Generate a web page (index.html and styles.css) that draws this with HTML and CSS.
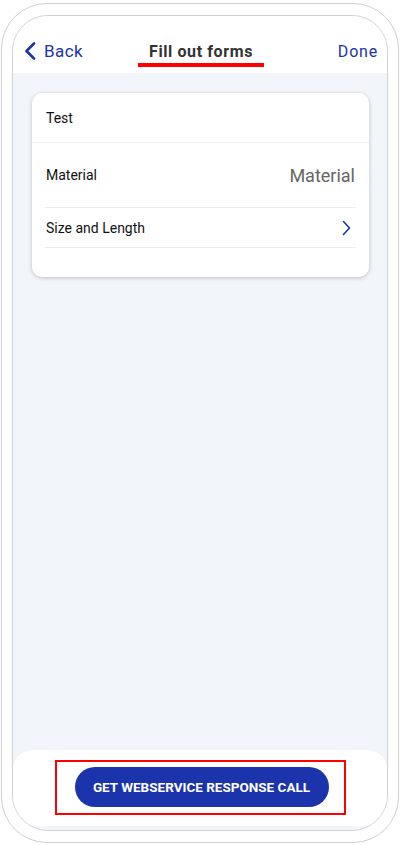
FILE: index.html
```html
<!DOCTYPE html>
<html>
<head>
<meta charset="utf-8">
<link rel="stylesheet" href="styles.css">
</head>
<body>
<div class="device">
  <div class="screen">
    <header class="topbar">
      <div class="back">
        <svg class="back-icon" width="12" height="18" viewBox="0 0 12 18"><path d="M10 1.5 L2.5 9 L10 16.5" fill="none" stroke="#1b34a6" stroke-width="2.6" stroke-linecap="round" stroke-linejoin="round"/></svg>
        <span>Back</span>
      </div>
      <div class="title">Fill out forms</div>
      <div class="done">Done</div>
    </header>
    <main class="content">
      <section class="card">
        <div class="row row-test"><span class="label">Test</span></div>
        <div class="row row-material"><span class="label">Material</span><span class="value">Material</span></div>
        <div class="row row-size">
          <span class="label">Size and Length</span>
          <svg class="chev" width="9" height="16" viewBox="0 0 9 16"><path d="M1.5 1.5 L7.5 8 L1.5 14.5" fill="none" stroke="#1b34a6" stroke-width="1.6" stroke-linecap="round" stroke-linejoin="round"/></svg>
        </div>
        <div class="card-foot"></div>
      </section>
    </main>
    <footer class="bottom">
      <div class="highlight">
        <button class="cta">GET WEBSERVICE RESPONSE CALL</button>
      </div>
    </footer>
  </div>
</div>
</body>
</html>
```
FILE: styles.css
```css
* { box-sizing: border-box; }
html, body { margin: 0; padding: 0; background: #ffffff; }
body {
  width: 400px;
  height: 845px;
  font-family: Roboto, "Noto Sans", Arial, sans-serif;
  padding: 3px 1px 0 1px;
}
.device {
  width: 398px;
  height: 840px;
  border: 1px solid #cfcfcf;
  border-radius: 46px;
  padding: 11px 10px 10px 10px;
  background: #ffffff;
}
.screen {
  width: 376px;
  height: 816px;
  border: 1px solid #d2d2d2;
  border-radius: 36px;
  overflow: hidden;
  background: #f2f5f9;
  display: flex;
  flex-direction: column;
}
.topbar {
  height: 57px;
  flex: none;
  background: #ffffff;
  display: grid;
  grid-template-columns: 1fr auto 1fr;
  align-items: center;
  padding: 13px 9px 0 11px;
}
.back {
  display: flex;
  align-items: center;
  gap: 8px;
  color: #1b34a6;
  font-size: 17px;
  letter-spacing: 0.4px;
}
.back-icon { display: block; }
.title {
  position: relative;
  font-size: 16px;
  font-weight: 700;
  color: #333333;
  letter-spacing: 0.6px;
}
.title::after {
  content: "";
  position: absolute;
  left: 50%;
  top: 21px;
  width: 126px;
  height: 4px;
  margin-left: -63px;
  background: #ff0000;
}
.done {
  justify-self: end;
  color: #1b34a6;
  font-size: 16px;
  letter-spacing: 0.8px;
}
.content {
  flex: 1;
  padding: 20px 18px 0 19px;
}
.card {
  background: #ffffff;
  border-radius: 10px;
  box-shadow: 0 1px 4px rgba(0, 0, 0, 0.22);
}
.row {
  display: flex;
  align-items: center;
  justify-content: space-between;
  padding: 0 14px 0 14px;
}
.label {
  font-size: 14px;
  color: #111111;
}
.row-test {
  height: 50px;
  border-bottom: 1px solid #f1f1f1;
}
.row-material {
  height: 65px;
  margin: 0 13px;
  padding: 0 1px 0 1px;
  border-bottom: 1px solid #ececec;
}
.value {
  font-size: 18px;
  color: #666666;
}
.row-size {
  height: 40px;
  margin: 0 13px;
  padding: 0 5px 0 1px;
  border-bottom: 1px solid #ececec;
}
.chev { display: block; }
.card-foot { height: 29px; }
.bottom {
  flex: none;
  height: 76px;
  margin-bottom: 4px;
  background: #ffffff;
  border-radius: 20px 20px 0 0;
  display: flex;
  justify-content: center;
  padding-top: 10px;
}
.highlight {
  width: 291px;
  height: 55px;
  border: 2px solid #ff0000;
  padding: 5px 17px 0 18px;
}
.cta {
  display: block;
  width: 254px;
  height: 40px;
  border: none;
  border-radius: 20px;
  background: #1b34ab;
  color: #ffffff;
  font-family: Roboto, "Noto Sans", Arial, sans-serif;
  font-size: 13.5px;
  font-weight: 700;
  padding: 0;
}
```
